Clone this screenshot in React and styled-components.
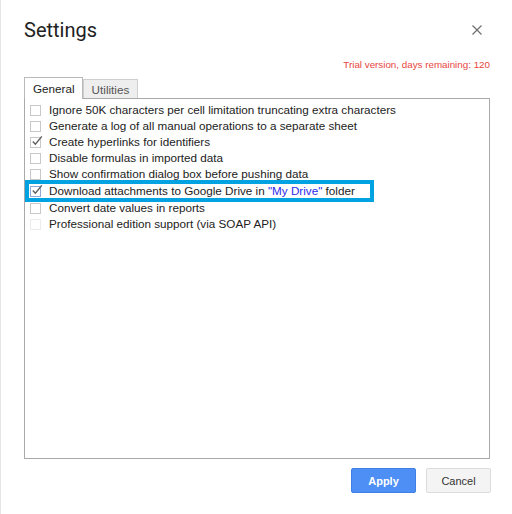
import React, { useState } from "react";
import styled, { createGlobalStyle, css } from "styled-components";

const GlobalStyle = createGlobalStyle`
  html, body {
    margin: 0;
    padding: 0;
    background: #fff;
  }
  body {
    font-family: "Liberation Sans", Arial, sans-serif;
  }
`;

const Dialog = styled.div`
  width: 512px;
  height: 514px;
  box-sizing: border-box;
  padding: 18px 22px 0 23px;
  border-left: 1px solid #e6e6e6;
  display: flex;
  flex-direction: column;
`;

const Header = styled.div`
  display: flex;
  align-items: center;
  justify-content: space-between;
  height: 24px;
`;

const Title = styled.h1`
  margin: 0;
  font-family: Roboto, "Noto Sans", sans-serif;
  font-weight: 400;
  font-size: 20px;
  line-height: 24px;
  color: #222;
`;

const CloseButton = styled.button`
  border: 0;
  background: none;
  padding: 0;
  margin-right: 7px;
  width: 12px;
  height: 12px;
  display: flex;
  align-items: center;
  justify-content: center;
  cursor: pointer;
`;

const Trial = styled.div`
  margin-top: 17px;
  text-align: right;
  font-size: 9.8px;
  line-height: 12px;
  color: #e8453c;
`;

const Tabs = styled.div`
  margin-top: 6px;
  display: flex;
  align-items: flex-end;
  height: 21px;
  position: relative;
  z-index: 1;
`;

const Tab = styled.div`
  box-sizing: border-box;
  font-size: 11.7px;
  border: 1px solid #b9b9b9;
  border-bottom: 0;
  cursor: pointer;
  ${(p) =>
    p.$active
      ? css`
          height: 22px;
          line-height: 22px;
          padding: 0 7px 0 8px;
          background: #fff;
          color: #222;
          margin-bottom: -1px;
        `
      : css`
          height: 19px;
          line-height: 19px;
          background: #eee;
          color: #555;
          border-color: #cfcfcf;
          padding: 0 8px 0 8px;
        `}
`;

const Panel = styled.div`
  box-sizing: border-box;
  height: 361px;
  border: 1px solid #a9a9a9;
  padding: 3px 0 0 5px;
  display: flex;
  flex-direction: column;
  align-items: flex-start;
`;

const Row = styled.label`
  display: flex;
  align-items: center;
  gap: 8px;
  height: 16px;
  font-size: 11.7px;
  line-height: 16px;
  color: #222;
  position: relative;
  cursor: pointer;
  ${(p) =>
    p.$highlight &&
    css`
      margin: 1px 0;
      padding-right: 15px;
      &::before {
        content: "";
        position: absolute;
        left: -5px;
        right: -4px;
        top: -3px;
        bottom: -3px;
        border: 4px solid #00a2e2;
        pointer-events: none;
      }
    `}
`;

const Box = styled.span`
  width: 11px;
  height: 11px;
  box-sizing: border-box;
  border: 1px solid ${(p) => (p.$disabled ? "#ececec" : p.$focus ? "#8fa9d8" : "#c8c8c8")};
  background: #fff;
  position: relative;
  flex: none;

  svg {
    position: absolute;
    left: 1px;
    top: -2px;
    overflow: visible;
  }
`;

const Link = styled.a`
  color: #2a2aee;
  text-decoration: none;
`;

const Footer = styled.div`
  margin-top: 9px;
  margin-right: -1px;
  display: flex;
  justify-content: flex-end;
  gap: 10px;
`;

const Button = styled.button`
  width: 65px;
  height: 25px;
  box-sizing: border-box;
  border-radius: 2px;
  font-family: "Liberation Sans", Arial, sans-serif;
  font-size: 11px;
  cursor: pointer;
  ${(p) =>
    p.$primary
      ? css`
          background: #4d8ff4;
          border: 1px solid #3f7fe6;
          color: #fff;
          font-weight: 700;
        `
      : css`
          background: #f4f4f4;
          border: 1px solid #dcdcdc;
          color: #333;
        `}
`;

const Check = () => (
  <svg width="11" height="11" viewBox="0 0 11 11">
    <path d="M0.8 5.4 L3.4 8.2 L9.8 0.4" fill="none" stroke="#5f5f5f" strokeWidth="1.4" />
  </svg>
);

const options = [
  { id: 1, text: "Ignore 50K characters per cell limitation truncating extra characters", checked: false },
  { id: 2, text: "Generate a log of all manual operations to a separate sheet", checked: false },
  { id: 3, text: "Create hyperlinks for identifiers", checked: true },
  { id: 4, text: "Disable formulas in imported data", checked: false },
  { id: 5, text: "Show confirmation dialog box before pushing data", checked: false },
  { id: 6, drive: true, checked: true },
  { id: 7, text: "Convert date values in reports", checked: false },
  { id: 8, text: "Professional edition support (via SOAP API)", checked: false, disabled: true },
];

export default function App() {
  const [values, setValues] = useState(() =>
    Object.fromEntries(options.map((o) => [o.id, o.checked]))
  );
  const [tab, setTab] = useState("general");

  const toggle = (o) => {
    if (o.disabled) return;
    setValues((v) => ({ ...v, [o.id]: !v[o.id] }));
  };

  return (
    <>
      <GlobalStyle />
      <Dialog>
        <Header>
          <Title>Settings</Title>
          <CloseButton aria-label="Close">
            <svg width="10" height="10" viewBox="0 0 10 10">
              <path d="M0.5 0.5 L9.5 9.5 M9.5 0.5 L0.5 9.5" stroke="#6e6e6e" strokeWidth="1.2" />
            </svg>
          </CloseButton>
        </Header>

        <Trial>Trial version, days remaining: 120</Trial>

        <Tabs>
          <Tab $active={tab === "general"} onClick={() => setTab("general")}>General</Tab>
          <Tab $active={tab === "utilities"} onClick={() => setTab("utilities")}>Utilities</Tab>
        </Tabs>

        <Panel>
          {options.map((o) => (
            <Row key={o.id} $highlight={o.drive} onClick={() => toggle(o)}>
              <Box $disabled={o.disabled} $focus={o.drive}>
                {values[o.id] && <Check />}
              </Box>
              {o.drive ? (
                <span>
                  Download attachments to Google Drive in <Link href="#">"My Drive"</Link> folder
                </span>
              ) : (
                <span>{o.text}</span>
              )}
            </Row>
          ))}
        </Panel>

        <Footer>
          <Button $primary>Apply</Button>
          <Button>Cancel</Button>
        </Footer>
      </Dialog>
    </>
  );
}
